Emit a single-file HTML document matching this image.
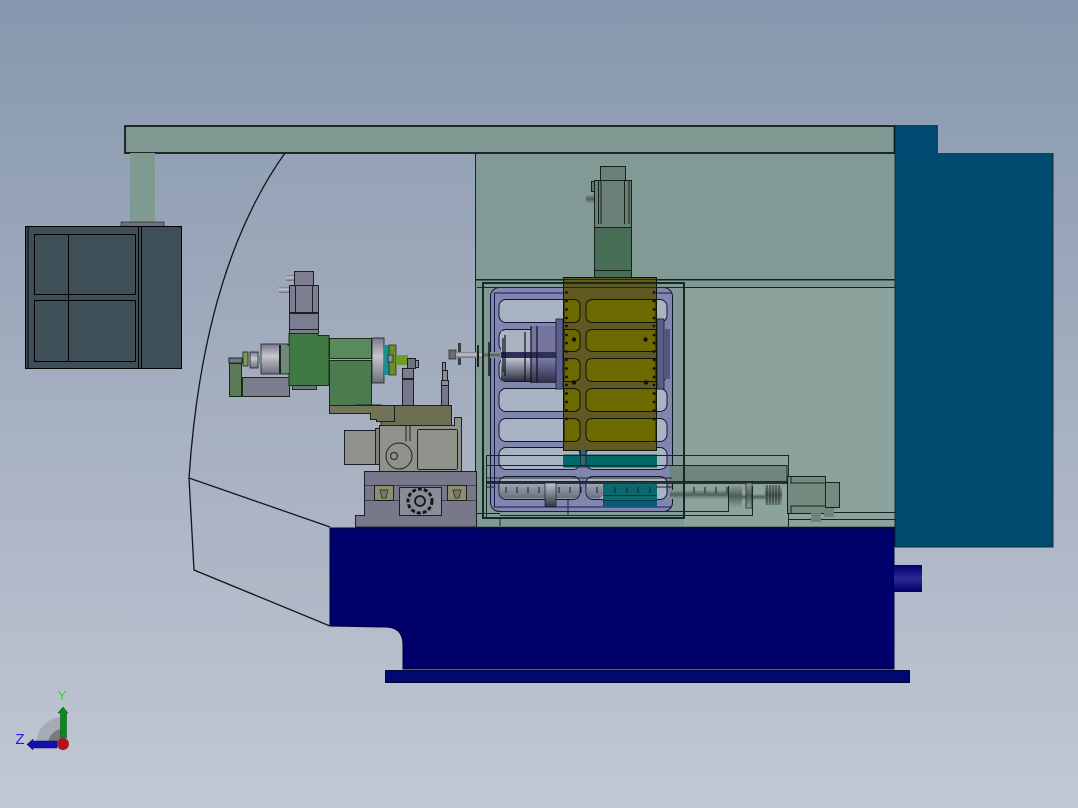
<!DOCTYPE html>
<html><head><meta charset="utf-8"><style>html,body{margin:0;padding:0;width:1078px;height:808px;overflow:hidden}svg{display:block}</style></head><body>
<svg width="1078" height="808" viewBox="0 0 1078 808" xmlns="http://www.w3.org/2000/svg">
<defs>
<linearGradient id="bg" x1="0" y1="0" x2="0" y2="1"><stop offset="0" stop-color="#8797ad"/><stop offset="1" stop-color="#c2c8d4"/></linearGradient>
<linearGradient id="cyl" x1="0" y1="0" x2="0" y2="1"><stop offset="0" stop-color="#777a88"/><stop offset=".4" stop-color="#c4c6cc"/><stop offset="1" stop-color="#6c6e7c"/></linearGradient>
<linearGradient id="cyl2" x1="0" y1="0" x2="0" y2="1"><stop offset="0" stop-color="#c0c6d0"/><stop offset=".45" stop-color="#7f8490"/><stop offset="1" stop-color="#2f3040"/></linearGradient>
<linearGradient id="cyl3" x1="0" y1="0" x2="0" y2="1"><stop offset="0" stop-color="#7a7ca8"/><stop offset="1" stop-color="#2e2e48"/></linearGradient>
<linearGradient id="scr" x1="0" y1="0" x2="0" y2="1"><stop offset="0" stop-color="#8d9e98"/><stop offset=".5" stop-color="#4f5f58"/><stop offset="1" stop-color="#8d9e98"/></linearGradient>
<linearGradient id="win" x1="0" y1="0" x2="0" y2="1"><stop offset="0" stop-color="#a0a6b4"/><stop offset="1" stop-color="#6a6e7c"/></linearGradient>
<linearGradient id="port" x1="0" y1="0" x2="0" y2="1"><stop offset="0" stop-color="#000070"/><stop offset=".5" stop-color="#2a2a92"/><stop offset="1" stop-color="#00006a"/></linearGradient>
</defs>
<rect width="1078" height="808" fill="url(#bg)"/>

<!-- glass guard -->
<path d="M285 153 Q203 268 189 478 L194 570 L330 626 L330 528 L475 528 L475 153 Z" fill="#a4acba" fill-opacity=".18"/>
<path d="M285 153 Q203 268 189 478 L194 570 L330 626 M189 478 L330 527" fill="none" stroke="#10161a" stroke-width="1.300"/>

<!-- green translucent right housing -->
<rect x="475" y="153" width="420" height="375" fill="#829a95"/>
<rect x="684" y="287" width="211" height="241" fill="#8ca29d"/>

<!-- top motor (rear) -->
<g stroke="#122018" stroke-width="1" shape-rendering="crispEdges">
<rect x="600.500" y="166.500" width="25" height="14" fill="#6b8079"/>
<rect x="594.500" y="180.500" width="37" height="47" fill="#6b8079"/>
<path d="M598.500 181V224M601 181V224M624.500 181V224M629 181V224" fill="none"/>
<rect x="594.500" y="227.500" width="37" height="50" fill="#486e58"/>
<path d="M595 270.500H631" fill="none"/>
<rect x="591.500" y="181.500" width="3" height="10" fill="#5f7570"/>
</g>
<rect x="586" y="194" width="8" height="10" fill="url(#scr)"/>

<!-- top beam -->
<rect x="125" y="126" width="769.500" height="27" fill="#7f9891" stroke="#050a08" stroke-width="1.600"/>
<rect x="895" y="125" width="43" height="28" fill="#004a72"/>
<rect x="895" y="153" width="158" height="394" fill="#004a6e"/>
<path d="M895 125V547M895 547H1053V153" stroke="#08303f" fill="none" stroke-width="1" shape-rendering="crispEdges"/>

<!-- housing lines -->
<g fill="none" stroke="#12241c" stroke-width="1" shape-rendering="crispEdges">
<path d="M475.500 153V528"/>
<path d="M475 279.500H895" stroke-width="1.500"/>
<path d="M684 287.500H895"/>
<path d="M788 512.500H895M788 519.500H895"/>
</g>

<!-- column & cabinet -->
<rect x="130" y="153" width="25" height="69" fill="#7f9a91"/>
<rect x="121" y="222" width="43" height="5" fill="#6c7082" stroke="#1a1c20" stroke-width=".6"/>
<g stroke="#000" stroke-width="1" shape-rendering="crispEdges">
<rect x="25.500" y="226.500" width="156" height="142" fill="#3e4f58"/>
<path d="M28 227V368M138.500 227V368M141.500 227V368" fill="none"/>
<rect x="34.500" y="234.500" width="101" height="60" fill="#3e4f58"/>
<rect x="34.500" y="300.500" width="101" height="61" fill="#3e4f58"/>
<path d="M68.500 234V361" fill="none"/>
</g>

<!-- left spindle head -->
<g stroke="#1c2024" stroke-width="1" shape-rendering="crispEdges">
<rect x="294.500" y="271.500" width="19" height="14" fill="#7c7e90"/>
<rect x="289.500" y="285.500" width="29" height="27" fill="#7c7e90"/>
<path d="M295.500 286V312M312.500 286V312" fill="none"/>
<rect x="289.500" y="313.500" width="29" height="20" fill="#7c7e90"/>
<path d="M290 329.500H318" fill="none"/>
</g>
<rect x="279" y="287" width="10" height="6" fill="url(#cyl)"/>
<rect x="286" y="275" width="8" height="6" fill="url(#cyl)"/>
<g stroke="#1c2a1c" stroke-width="1" shape-rendering="crispEdges">
<rect x="242.500" y="377.500" width="47" height="19" fill="#7b7d8c"/>
<rect x="229.500" y="363.500" width="12" height="33" fill="#5d7a58"/>
<rect x="229" y="358" width="13" height="5" fill="#74768a"/>
<rect x="292.500" y="385.500" width="24" height="4" fill="#70727f"/>
<path d="M289 333.500V385.500H329V335.500H318V333.500Z" fill="#3f7a45"/>
<rect x="329.500" y="338.500" width="42" height="20" fill="#5a8a5c"/>
<rect x="329.500" y="360.500" width="42" height="45" fill="#4c7b50"/>
<path d="M329 358.500H372M329 360.500H372" fill="none"/>
</g>
<rect x="261" y="344" width="27" height="30" fill="url(#cyl)" stroke="#1c2024" stroke-width=".8"/>
<rect x="279" y="345" width="2" height="29" fill="#1c2024"/>
<rect x="281" y="346" width="8" height="27" fill="#6f8878"/>
<rect x="250" y="352" width="8" height="16" fill="url(#cyl)" stroke="#1c2024" stroke-width=".8"/>
<rect x="243" y="352" width="5" height="14" fill="#7f9a50" stroke="#1c2024" stroke-width=".8"/>
<rect x="258" y="356" width="3" height="8" fill="#6f8890"/>
<rect x="372" y="338" width="12" height="45" fill="url(#cyl)" stroke="#1c2024" stroke-width=".8"/>
<rect x="384" y="345" width="7" height="30" fill="#1f8f95"/>
<rect x="389" y="345" width="7" height="30" fill="#6d8f25" stroke="#1c2024" stroke-width=".7"/>
<rect x="396" y="355" width="12" height="10" fill="#6d9d25"/>
<rect x="388" y="355" width="5" height="7" fill="#8a8c98" stroke="#1c2024" stroke-width=".7"/>
<g stroke="#1c2024" stroke-width="1" shape-rendering="crispEdges">
<rect x="402.500" y="379.500" width="11" height="26" fill="#74768a"/>
<rect x="402.500" y="368.500" width="11" height="10" fill="#7b7d8c"/>
<rect x="407.500" y="358.500" width="8" height="10" fill="#70727f"/>
<rect x="415.500" y="360.500" width="3" height="7" fill="#8a8c98"/>
<rect x="441.500" y="385.500" width="7" height="20" fill="#74768a"/>
<rect x="441.500" y="380.500" width="7" height="5" fill="#8a8c98"/>
<rect x="442.500" y="370.500" width="5" height="10" fill="#8a8c98"/>
<rect x="442.500" y="362.500" width="3" height="8" fill="#8a8c98"/>
<path d="M329.500 405.500H451.500V425.500H381V405Z" fill="#6e6e55"/>
<path d="M329.500 405.500H394.500V421.500H376.500V419.500H370.500V413.500H329.500Z" fill="#737358"/>
<path d="M379.500 425.500H454.500V417.500H461.500V471.500H379.500Z" fill="#8f918b"/>
<rect x="344.500" y="430.500" width="31" height="34" fill="#8f918b"/>
<rect x="375.500" y="428.500" width="4" height="36" fill="#7f817c"/>
<rect x="417.500" y="429.500" width="40" height="40" rx="2" fill="#8f918b"/>
<path d="M406 426V441M410 426V441" fill="none"/>
<path d="M364.500 471.500H476.500V527H355.500V515.500H364.500Z" fill="#77788a"/>
<path d="M364.500 485.500H476M364.500 500.500H476" fill="none" stroke-opacity=".6"/>
<rect x="374.500" y="485.500" width="19" height="15" fill="#8c8c6e"/>
<rect x="447.500" y="485.500" width="19" height="15" fill="#8c8c6e"/>
<rect x="399.500" y="487.500" width="42" height="28" fill="#8a8c98"/>
</g>
<circle cx="399" cy="456" r="13" fill="#8f918b" stroke="#1c2024" stroke-width="1"/>
<circle cx="394" cy="456" r="3.500" fill="none" stroke="#1c2024" stroke-width="1"/>
<circle cx="420" cy="501" r="12" fill="none" stroke="#15171c" stroke-width="3" stroke-dasharray="4 2"/>
<circle cx="420" cy="501" r="5" fill="#80828c" stroke="#15171c" stroke-width="1.800"/>
<path d="M380 490H388L386 498H382Z M453 490H461L459 498H455Z" fill="#77786a" stroke="#222" stroke-width=".7"/>
<rect x="458" y="343" width="3" height="22" fill="#3a3e40"/>
<rect x="449" y="350" width="7" height="9" fill="#6a6c78" stroke="#222" stroke-width=".7"/>
<rect x="456" y="352" width="34" height="6" fill="url(#cyl)"/>
<rect x="477" y="345" width="2" height="22" fill="#22302a"/>

<!-- plate -->
<rect x="490.500" y="287.500" width="182" height="224" rx="9" fill="#8286ae" stroke="#0e1428" stroke-width="1"/>
<path d="M494.500 293V507H672M494 293H672" fill="none" stroke="#151a55" stroke-width="1" shape-rendering="crispEdges"/>
<g fill="#a8b3c4" stroke="#0e1630" stroke-width="1">
<rect x="499" y="299.500" width="81" height="23" rx="7"/><rect x="586" y="299.500" width="81" height="23" rx="7"/>
<rect x="499" y="329.500" width="81" height="22" rx="7"/><rect x="586" y="329.500" width="81" height="22" rx="7"/>
<rect x="499" y="358.500" width="81" height="23" rx="7"/><rect x="586" y="358.500" width="81" height="23" rx="7"/>
<rect x="499" y="388.500" width="81" height="23" rx="7"/><rect x="586" y="388.500" width="81" height="23" rx="7"/>
<rect x="499" y="418.500" width="81" height="23" rx="7"/><rect x="586" y="418.500" width="81" height="23" rx="7"/>
<rect x="499" y="447.500" width="81" height="22" rx="7"/><rect x="586" y="447.500" width="81" height="22" rx="7"/>
<rect x="499" y="476.500" width="81" height="23" rx="7"/><rect x="586" y="476.500" width="81" height="23" rx="7"/>
</g>
<rect x="500" y="483" width="79" height="15.500" rx="5" fill="url(#win)"/>
<rect x="587" y="483" width="16" height="15.500" rx="5" fill="url(#win)"/>
<!-- spindle in plate -->
<path d="M501 345Q503 332 512 331H531V380H512Q503 379 501 366Z" fill="#9ea3b2"/>
<rect x="501" y="331" width="30" height="25" fill="#b2b6c6" opacity=".7"/>
<rect x="501" y="358" width="30" height="23" fill="url(#cyl2)"/>
<rect x="501" y="352" width="56" height="6" fill="#2e3058"/>
<rect x="531" y="326" width="26" height="26" fill="#74749e"/>
<rect x="531" y="358" width="26" height="25" fill="url(#cyl3)"/>
<path d="M525 332V381M537 326V383M531 326V383M505 335V376M503 338V372" stroke="#0f1022" stroke-width="1.200" fill="none"/>
<rect x="556" y="319" width="7" height="70" fill="#5c5f8a" stroke="#11162c" stroke-width=".8"/>
<rect x="657" y="319" width="7" height="70" fill="#5c5f8a" stroke="#11162c" stroke-width=".8"/>
<rect x="664" y="329" width="6" height="50" fill="#53567e"/>
<rect x="483" y="352" width="17" height="6" fill="url(#scr)"/>
<path d="M489 342V376M478 350V366" stroke="#0e2018" stroke-width="1.500"/>
<!-- olive plate -->
<rect x="563.500" y="277.500" width="93" height="173" fill="#5f5a22" stroke="#121405" stroke-width="1" shape-rendering="crispEdges"/>
<g fill="#6e6a02" stroke="#111406" stroke-width="1">
<path d="M564 299.500H573Q580 299.500 580 306V316Q580 322.500 573 322.500H564Z"/>
<path d="M564 329.500H573Q580 329.500 580 336V345Q580 351.500 573 351.500H564Z"/>
<path d="M564 358.500H573Q580 358.500 580 365V375Q580 381.500 573 381.500H564Z"/>
<path d="M564 388.500H573Q580 388.500 580 395V405Q580 411.500 573 411.500H564Z"/>
<path d="M564 418.500H573Q580 418.500 580 425V435Q580 441.500 573 441.500H564Z"/>
<path d="M656 299.500H593Q586 299.500 586 306V316Q586 322.500 593 322.500H656Z"/>
<path d="M656 329.500H593Q586 329.500 586 336V345Q586 351.500 593 351.500H656Z"/>
<path d="M656 358.500H593Q586 358.500 586 365V375Q586 381.500 593 381.500H656Z"/>
<path d="M656 388.500H593Q586 388.500 586 395V405Q586 411.500 593 411.500H656Z"/>
<path d="M656 418.500H593Q586 418.500 586 425V435Q586 441.500 593 441.500H656Z"/>
</g>
<g fill="#101206">
<circle cx="566.500" cy="292.500" r="1.400"/><circle cx="566.500" cy="301" r="1.400"/><circle cx="566.500" cy="309.500" r="1.400"/><circle cx="566.500" cy="318" r="1.400"/><circle cx="566.500" cy="326" r="1.400"/><circle cx="566.500" cy="335" r="1.400"/><circle cx="566.500" cy="343" r="1.400"/><circle cx="566.500" cy="351.500" r="1.400"/><circle cx="566.500" cy="360" r="1.400"/><circle cx="566.500" cy="368.500" r="1.400"/><circle cx="566.500" cy="377" r="1.400"/><circle cx="566.500" cy="385" r="1.400"/><circle cx="566.500" cy="393.500" r="1.400"/><circle cx="566.500" cy="402" r="1.400"/><circle cx="566.500" cy="410.500" r="1.400"/><circle cx="566.500" cy="419" r="1.400"/>
<circle cx="654" cy="292.500" r="1.400"/><circle cx="654" cy="301" r="1.400"/><circle cx="654" cy="309.500" r="1.400"/><circle cx="654" cy="318" r="1.400"/><circle cx="654" cy="326" r="1.400"/><circle cx="654" cy="335" r="1.400"/><circle cx="654" cy="343" r="1.400"/><circle cx="654" cy="351.500" r="1.400"/><circle cx="654" cy="360" r="1.400"/><circle cx="654" cy="368.500" r="1.400"/><circle cx="654" cy="377" r="1.400"/><circle cx="654" cy="385" r="1.400"/><circle cx="654" cy="393.500" r="1.400"/><circle cx="654" cy="402" r="1.400"/><circle cx="654" cy="410.500" r="1.400"/><circle cx="654" cy="419" r="1.400"/>
<circle cx="574" cy="339.500" r="2.200"/><circle cx="645.500" cy="339.500" r="2.200"/><circle cx="574" cy="382.500" r="2.200"/><circle cx="646" cy="382.500" r="2.200"/>
</g>
<rect x="563" y="455" width="94" height="12" fill="#006a68"/>
<rect x="580" y="450" width="6" height="17" fill="#33657a"/>
<path d="M563.500 455H657M563.500 467H657M580.500 450V467M586 450V467" stroke="#0c2020" stroke-width=".8" fill="none"/>
<rect x="603" y="484" width="54" height="23" fill="#0a6a70"/>
<rect x="603" y="500" width="54" height="7" fill="#0a5a78"/>
<path d="M603 495.500H657M603 500.500H657" stroke="#0c2a2a" stroke-width=".8"/>

<!-- slide / screw -->
<rect x="670" y="465" width="117" height="16" fill="#6f8680"/>
<rect x="670" y="490" width="58" height="9" fill="url(#scr)"/>
<rect x="486" y="482" width="301" height="2" fill="#1b2a22" opacity=".9"/>
<rect x="742" y="494" width="24" height="6" fill="url(#scr)"/>
<rect x="728" y="485" width="14" height="22" fill="url(#scr)"/>
<rect x="746" y="483" width="6" height="25" fill="url(#scr)" stroke="#16241c" stroke-width=".7"/>
<rect x="765" y="485" width="17" height="20" fill="url(#scr)"/>
<path d="M767 485V505M770 485V505M773 485V505M776 485V505M779 485V505" stroke="#16241c" stroke-width=".8"/>
<path d="M506 487v6M517 487v6M528 487v6M539 487v6M559 487v6M570 487v6M581 487v6M597 487v6M615 487v6M627 487v6M638 487v6M650 487v6M694 487v6M705 487v6M716 487v6M727 487v6" stroke="#12221a" stroke-width="1"/>
<rect x="545" y="483" width="11" height="24" fill="url(#cyl2)" stroke="#141a2a" stroke-width=".7"/>
<g fill="none" stroke="#142a20" stroke-width="1" shape-rendering="crispEdges">
<path d="M483 283H684V518H483Z" stroke-width="2"/>
<path d="M475 279.500H657M477 287.500H684"/>
<path d="M486.500 455.500H788.500V527M486.500 455.500V517"/>
<path d="M486 465.500H787V481M486 481.500H787"/>
<path d="M500 518V526M500 511.500H728.500V486M500 515.500H752.500V486"/>
<path d="M568 500V515M476 513.500H500M476 527.500H500"/>
<path d="M486 478H672M486 487H494M656 487H672"/>
</g>
<g stroke="#14241c" stroke-width="1" shape-rendering="crispEdges">
<rect x="787.500" y="476.500" width="38" height="37" fill="#75897f"/>
<rect x="825.500" y="482.500" width="14" height="25" fill="#75897f"/>
<path d="M791 476.500V483H826M791 513V506H826" fill="none"/>
</g>
<rect x="811" y="513" width="10" height="9" fill="#6e847c"/>
<rect x="824" y="508" width="10" height="9" fill="#6e847c"/>

<!-- base -->
<path d="M330 528H894V669H403V645Q403 627 385 627L330 626Z" fill="#00006a" stroke="#00003a" stroke-width="1"/>
<rect x="894" y="565" width="28" height="27" fill="url(#port)"/>
<rect x="385.500" y="670.500" width="524" height="12" fill="#000a6e" stroke="#00063a" stroke-width="1" shape-rendering="crispEdges"/>
<path d="M476 527.500H895" stroke="#0a1410" stroke-width="1.500"/>

<!-- triad -->
<path d="M63 744L36 744A27 27 0 0 1 63 717Z" fill="#a7acb4"/>
<path d="M63 744L48 744A15 15 0 0 1 63 729Z" fill="#777a80"/>
<path d="M60.500 738V713H58L63 707L68 713H66.500V738Z" fill="#0a8a1a" stroke="#064a10" stroke-width=".5"/>
<path d="M57 741H33V739L27 744.500L33 750V748H57Z" fill="#1010b0" stroke="#080860" stroke-width=".5"/>
<circle cx="63" cy="744" r="6" fill="#b0141c"/>
<text x="62" y="700" font-family="Liberation Sans, sans-serif" font-size="13" fill="#20e020" text-anchor="middle">Y</text>
<text x="20" y="744" font-family="Liberation Sans, sans-serif" font-size="15" fill="#1818f0" text-anchor="middle">Z</text>
</svg>
</body></html>
